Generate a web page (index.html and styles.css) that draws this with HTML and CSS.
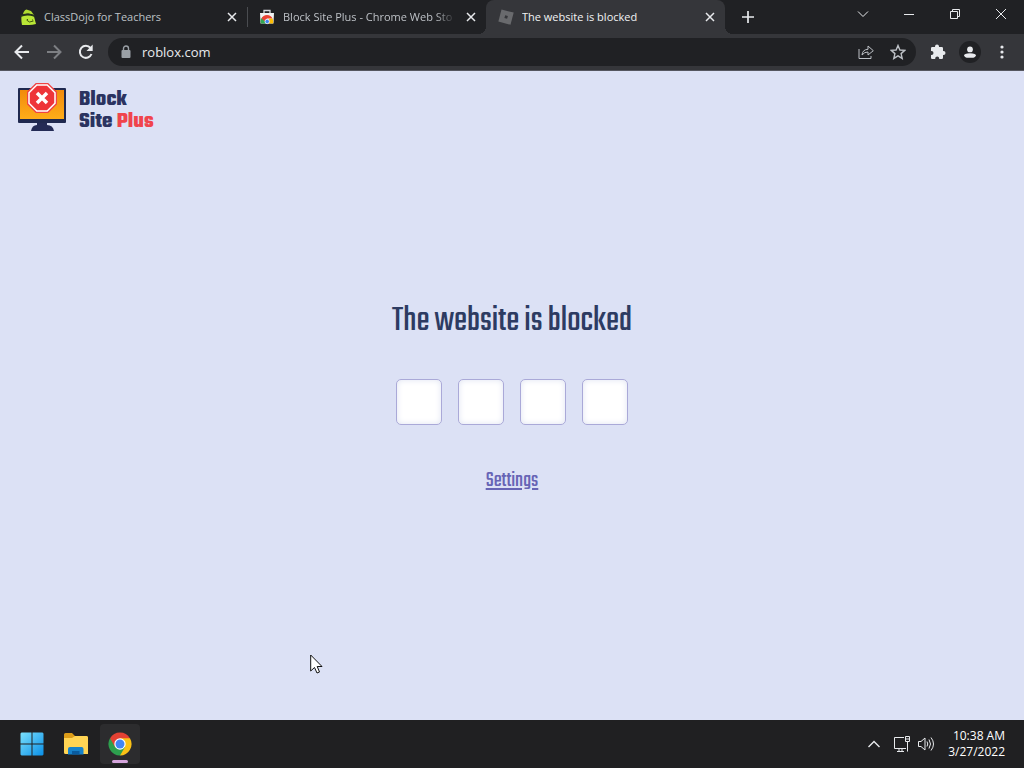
FILE: index.html
```
<!DOCTYPE html>
<html lang="en">
<head>
<meta charset="utf-8">
<meta name="viewport" content="width=device-width, initial-scale=1">
<title>The website is blocked</title>
<link rel="stylesheet" href="styles.css">
</head>
<body>

<div class="tabstrip">
  <div class="tab">
    <svg class="favicon" viewBox="0 0 16 16">
      <path d="M1.500 7 Q7 4 14 7.500 L16 15 Q9 16.500 2 16 Q1 11 1.500 7Z" fill="#b9e636"/>
      <path d="M3 5 Q4 1 6.500 .5 L11 2 L14 6 Q8 3 3 6Z" fill="#b0dc30"/>
      <path d="M0 6.500 Q6 2.500 15 6.200 L14.500 7.800 Q7 5 .5 8Z" fill="#26351a"/>
      <path d="M6.500 11 Q9 14.500 13.500 12 M7 10.500h1 M12 11h1" stroke="#41580f" fill="none"/>
    </svg>
    <span class="title">ClassDojo for Teachers</span>
    <button class="close" aria-label="Close tab"><svg viewBox="0 0 10 10"><path d="M1 1L9 9M9 1L1 9"/></svg></button>
  </div>
  <div class="tab divided">
    <svg class="favicon" viewBox="0 0 16 16">
      <path d="M5 4V1.500h6V4" fill="none" stroke="#d8dade" stroke-width="1.300"/>
      <path d="M1 4h14l-.5 10.500h-13Z" fill="#f1f3f4"/>
      <path d="M2 14.500A6 6 0 0 1 3.500 8L6.500 12.500V14.500Z" fill="#34a853"/>
      <path d="M2.500 9.500A6 6 0 0 1 13.500 9.500H8L5.500 12Z" fill="#ea4335"/>
      <path d="M13.500 9.500A6 6 0 0 1 14 14.500H8.500L10.500 9.500Z" fill="#fbbc05"/>
      <circle cx="8.200" cy="12.500" r="2.200" fill="#4285f4" stroke="#fff" stroke-width=".7"/>
    </svg>
    <span class="title faded">Block Site Plus - Chrome Web Sto</span>
    <button class="close" aria-label="Close tab"><svg viewBox="0 0 10 10"><path d="M1 1L9 9M9 1L1 9"/></svg></button>
  </div>
  <div class="tab active">
    <svg class="favicon" viewBox="0 0 16 16">
      <path d="M3.500 .5L15.700 3.600L12.500 15.800L.4 12.500Z" fill="#696a6d"/>
      <path d="M7.200 6.300L9.900 7L9.100 9.800L6.400 9Z" fill="#35363a"/>
    </svg>
    <span class="title">The website is blocked</span>
    <button class="close" aria-label="Close tab"><svg viewBox="0 0 10 10"><path d="M1 1L9 9M9 1L1 9"/></svg></button>
  </div>
  <button class="newtab" aria-label="New tab"><svg viewBox="0 0 12 12"><path d="M6 0V12M0 6H12"/></svg></button>
  <div class="window-buttons">
    <button aria-label="Search tabs"><svg viewBox="0 0 12 12"><path d="M1 3.500L6 8.500L11 3.500"/></svg></button>
    <button aria-label="Minimize"><svg viewBox="0 0 12 12"><path d="M1 6.500H11"/></svg></button>
    <button aria-label="Restore"><svg viewBox="0 0 12 12"><path d="M1.500 3.500h7v7h-7ZM3.500 3.500v-2h7v7h-2"/></svg></button>
    <button aria-label="Close"><svg viewBox="0 0 12 12"><path d="M1 1L11 11M11 1L1 11"/></svg></button>
  </div>
</div>

<div class="toolbar">
  <div class="nav">
    <button aria-label="Back"><svg viewBox="0 0 16 16"><path d="M15 8H2M8 1.500L1.500 8L8 14.500"/></svg></button>
    <button aria-label="Forward" disabled><svg viewBox="0 0 16 16"><path d="M1 8H14M8 1.500L14.500 8L8 14.500"/></svg></button>
    <button aria-label="Reload"><svg viewBox="0 0 16 16"><path d="M13.500 10A6 6 0 1 1 12.500 4"/><path class="solid" d="M14.700 0.500V7H8.500Z"/></svg></button>
  </div>
  <div class="omnibox">
    <svg class="lock" viewBox="0 0 10 14"><path d="M2.500 6V3.500a2.500 2.500 0 0 1 5 0V6" fill="none" stroke="#9aa0a6" stroke-width="1.400"/><rect x=".5" y="5" width="9" height="8" rx="1" fill="#9aa0a6"/></svg>
    <input type="text" value="roblox.com" aria-label="Address">
    <button aria-label="Share"><svg viewBox="0 0 16 16"><path d="M1 5V14.500H13V12M4 11Q4.500 5.500 10 5.300V2L15.300 6.700L10 11V8Q6.500 7.800 4 11Z"/></svg></button>
    <button aria-label="Bookmark this tab"><svg viewBox="0 0 16 16"><path stroke-width="1.400" d="M8 1.500L9.900 6L14.800 6.400L11.100 9.600L12.200 14.400L8 11.800L3.800 14.400L4.900 9.600L1.200 6.400L6.100 6Z"/></svg></button>
  </div>
  <div class="tools">
    <button aria-label="Extensions"><svg viewBox="0 0 16 16"><path class="solid" d="M1 4.200Q1 3 2.200 3H5V2.500a2 2 0 0 1 4 0V3h2.800Q13 3 13 4.200V7h.5a2 2 0 0 1 0 4H13v2.800Q13 15 11.800 15H9.200v-.5a2 2 0 0 0-4 0v.5H2.200Q1 15 1 13.800V11h.5a2 2 0 0 0 0-4H1Z"/></svg></button>
    <button class="profile" aria-label="Profile"><svg viewBox="0 0 16 16"><circle class="solid" cx="8" cy="5" r="3.300"/><path class="solid" d="M1 14.500V12.500Q1 9.300 8 9.300T15 12.500V14.500Z"/></svg></button>
    <button aria-label="Menu"><svg viewBox="0 0 16 16"><circle class="solid" cx="8" cy="3" r="1.600"/><circle class="solid" cx="8" cy="8" r="1.600"/><circle class="solid" cx="8" cy="13" r="1.600"/></svg></button>
  </div>
</div>

<div class="page">
  <header class="brand">
    <svg viewBox="0 0 48 50">
      <defs><linearGradient id="screen" x2="0" y2="1"><stop stop-color="#f18a0b"/><stop offset="1" stop-color="#ffad19"/></linearGradient></defs>
      <path d="M19 40H29V43Q35 43 36 49H13Q14 43 19 43Z" fill="#242b55"/>
      <rect y="6" width="48" height="35" rx="1" fill="#20294f"/>
      <rect x="2" y="8" width="44" height="29" fill="url(#screen)"/>
      <path d="M17.800 1H30.200L39 9.800V22.200L30.200 31H17.800L9 22.200V9.800Z" fill="#f04444"/>
      <path d="M18.800 3H29.200L37 10.800V21.200L29.200 29H18.800L11 21.200V10.800Z" fill="#ee3439" stroke="#fff" stroke-width="1.500"/>
      <path d="M19 11L29 21M29 11L19 21" stroke="#fff" stroke-width="3.500"/>
    </svg>
    <div class="brand-name">Block<br>Site <span>Plus</span></div>
  </header>
  <main>
    <h1>The website is blocked</h1>
    <form class="pin">
      <input type="password" maxlength="1" aria-label="Digit 1">
      <input type="password" maxlength="1" aria-label="Digit 2">
      <input type="password" maxlength="1" aria-label="Digit 3">
      <input type="password" maxlength="1" aria-label="Digit 4">
    </form>
    <a class="settings" href="#">Settings</a>
  </main>
</div>

<div class="taskbar">
  <div class="apps">
    <button aria-label="Start"><svg viewBox="0 0 24 24">
      <defs><linearGradient id="win" x2="1" y2="1"><stop stop-color="#7be0fb"/><stop offset="1" stop-color="#0a8fe8"/></linearGradient></defs>
      <path d="M1.500 .5H11.500V11.500H.5V1.500ZM12.500 .5H22.500L23.500 1.500V11.500H12.500ZM.5 12.500H11.500V23.500H1.500L.5 22.500ZM12.500 12.500H23.500V22.500L22.500 23.500H12.500Z" fill="url(#win)"/>
    </svg></button>
    <button aria-label="File Explorer"><svg viewBox="0 0 24 24">
      <path d="M0 2.500Q0 1 1.500 1H8L11 4H22Q24 4 24 6V12H0Z" fill="#dc9c18"/>
      <path d="M0 6H8L11 4H22.500Q24 4 24 5.500V22H1.500Q0 22 0 20.500Z" fill="#ffd454"/>
      <path d="M4 22.500V17Q4 15 6 15H17.500Q19.500 15 19.500 17V22.500Z" fill="#1682cb"/>
      <path d="M8 22.500V19H15.500V22.500Z" fill="#0a5b9e"/>
    </svg></button>
    <button class="running" aria-label="Google Chrome"><svg viewBox="0 0 24 24">
      <path d="M12 12L2.040 6.250A11.500 11.500 0 0 1 21.960 6.250Z" fill="#e34133"/>
      <path d="M12 12L21.960 6.250A11.500 11.500 0 0 1 12 23.500Z" fill="#fbc116"/>
      <path d="M12 12V23.500A11.500 11.500 0 0 1 2.040 6.250Z" fill="#2da04e"/>
      <path d="M12 6.250H21.960L17 14.900Z" fill="#fbc116"/>
      <path d="M17 14.900L12 23.500L7 14.900Z" fill="#2da04e"/>
      <path d="M7 14.900L2.040 6.250H12Z" fill="#e34133"/>
      <circle cx="12" cy="12" r="5.700" fill="#fff"/>
      <circle cx="12" cy="12" r="4.500" fill="#4285f4"/>
    </svg></button>
  </div>
  <div class="tray">
    <button aria-label="Show hidden icons"><svg viewBox="0 0 16 16"><path stroke-width="1.400" d="M2.500 11L8 5.500L13.500 11"/></svg></button>
    <button aria-label="Network"><svg viewBox="0 0 16 16"><path d="M10 1.500H.5V12.500H12M3 15.500H10M5 12.500V15.500M8 12.500V15.500M11.500 .5H15.500V5.500H11.500ZM13.500 5.500V15.500M11.500 3H15.500"/></svg></button>
    <button aria-label="Volume"><svg viewBox="0 0 16 16"><path d="M.5 5.500H3L7 2V14L3 10.500H.5ZM9 5.500Q10.500 8 9 10.500M11 3.500Q14 8 11 12.500M13 1.500Q18 8 13 14.500"/></svg></button>
    <div class="clock">10:38 AM<br>3/27/2022</div>
  </div>
</div>

<svg class="cursor" viewBox="0 0 13 20"><path d="M.7 1V17L4.500 13.500L7 19L9.500 18L7.200 12.500H12Z" fill="#fff" stroke="#111"/></svg>

</body>
</html>
```
FILE: styles.css
```
* {box-sizing: border-box;}

body {
  display: flex;
  flex-direction: column;
  min-height: 100vh;
  margin: 0;
  background-color: #dce1f5;
  font-family: "Segoe UI", "Open Sans", sans-serif;
  font-size: 12px;
}

button {
  display: flex;
  align-items: center;
  justify-content: center;
  flex: none;
  padding: 0;
  border: none;
  background: none;
  color: #e8eaed;
  cursor: pointer;
}

button svg {
  width: 16px;
  height: 16px;
  fill: none;
  stroke: currentColor;
}

.solid {
  fill: currentColor;
  stroke: none;
}

/* Tabs */
.tabstrip {
  display: flex;
  height: 34px;
  padding-left: 8px;
  background-color: #202124;
}

.tab {
  display: flex;
  align-items: center;
  flex: 0 1 239px;
  min-width: 0;
  gap: 8px;
  padding: 0 8px 0 12px;
  color: #bdc1c6;
  font-size: 11px;
}

.tab.divided {
  background: linear-gradient(#4a4c50, #4a4c50) left center / 1px 20px no-repeat;
}

.tab.active {
  position: relative;
  border-radius: 8px 8px 0 0;
  background-color: #35363a;
  color: #f1f3f4;
}

/* Curved feet of the active tab */
.tab.active::before, .tab.active::after {
  position: absolute;
  bottom: 0;
  width: 8px;
  height: 8px;
  content: "";
}

.tab.active::before {
  right: 100%;
  background: radial-gradient(circle at 0 0, transparent 8px, #35363a 8px);
}

.tab.active::after {
  left: 100%;
  background: radial-gradient(circle at 100% 0, transparent 8px, #35363a 8px);
}

.favicon {
  flex: none;
  width: 16px;
  height: 16px;
}

.title {
  flex: 1;
  overflow: hidden;
  line-height: 16px;
  white-space: nowrap;
}

.title.faded {
  -webkit-mask-image: linear-gradient(to right, #000 88%, transparent);
  mask-image: linear-gradient(to right, #000 88%, transparent);
}

.close {
  width: 14px;
  height: 14px;
}

.close svg {
  width: 10px;
  height: 10px;
  stroke-width: 1.5;
}

.newtab {
  width: 28px;
  margin-left: 9px;
}

.newtab svg {
  width: 12px;
  height: 12px;
  stroke-width: 1.7;
}

.window-buttons {
  display: flex;
  height: 28px;
  margin-left: auto;
}

.window-buttons button {
  width: 46px;
}

.window-buttons svg {
  width: 12px;
  height: 12px;
}

/* Toolbar */
.toolbar {
  display: flex;
  align-items: center;
  gap: 6px;
  height: 37px;
  padding: 0 6px;
  border-bottom: 1px solid #55565f;
  background-color: #35363a;
}

.nav, .tools {
  display: flex;
}

.nav button, .tools button {
  width: 32px;
  height: 28px;
}

.nav svg {
  stroke-width: 2;
}

.nav button:disabled {
  color: #7d7f83;
}

.tools .profile svg {
  width: 22px;
  height: 22px;
  padding: 4px;
  border-radius: 50%;
  background-color: #202124;
}

.omnibox {
  display: flex;
  align-items: center;
  flex: 1;
  height: 28px;
  padding: 0 2px 0 13px;
  border-radius: 14px;
  background-color: #202124;
}

.omnibox input {
  flex: 1;
  min-width: 0;
  padding: 0 11px;
  border: none;
  outline: none;
  background: none;
  color: #e8eaed;
  font: 13px "Segoe UI", "Open Sans", sans-serif;
}

.omnibox button {
  width: 32px;
  color: #bdc1c6;
}

.lock {
  width: 10px;
  height: 14px;
}

/* Blocked page */
.page {
  display: flex;
  flex-direction: column;
  flex: 1;
  font-family: Teko, "Liberation Sans Narrow", "Liberation Sans", sans-serif;
}

.brand {
  display: flex;
  align-items: center;
  gap: 13px;
  height: 72px;
  padding: 0 18px;
}

.brand svg {
  width: 48px;
  height: 50px;
}

.brand-name {
  padding-top: 8px;
  color: #2b3360;
  font-size: 22px;
  font-weight: bold;
  line-height: 22px;
}

.brand-name span {
  color: #f0444c;
}

main {
  display: flex;
  flex-direction: column;
  align-items: center;
  justify-content: center;
  flex: 1;
  gap: 37px;
  padding-bottom: 62px;
}

h1 {
  margin: 0;
  color: #2d3b62;
  font-size: 36px;
  font-weight: normal;
  line-height: 40px;
}

.pin {
  display: flex;
  gap: 16px;
}

.pin input {
  width: 46px;
  height: 46px;
  border: 1px solid #aaa9d8;
  border-radius: 5px;
  background-color: #fff;
  box-shadow: inset 0 0 6px #dfe3f2;
  font-size: 24px;
  text-align: center;
}

.settings {
  color: #6764b5;
  font-size: 22px;
  line-height: 38px;
}

/* Taskbar */
.taskbar {
  display: flex;
  align-items: center;
  justify-content: space-between;
  height: 48px;
  padding: 0 19px 0 12px;
  background-color: #202022;
}

.apps, .tray {
  display: flex;
  align-items: center;
}

.apps {
  gap: 4px;
}

.apps button {
  position: relative;
  width: 40px;
  height: 40px;
  border-radius: 4px;
}

.apps svg {
  width: 24px;
  height: 24px;
  stroke: none;
}

.apps .running {
  background-color: #2c2c2e;
}

.apps .running::after {
  position: absolute;
  bottom: 1px;
  left: 12px;
  width: 16px;
  height: 3px;
  border-radius: 2px;
  background-color: #d5a5dc;
  content: "";
}

.tray button {
  width: 24px;
  height: 40px;
}

.tray button:first-child {
  width: 32px;
}

.clock {
  margin-left: 10px;
  color: #fff;
  line-height: 16px;
  text-align: right;
}

.cursor {
  position: absolute;
  top: 654px;
  left: 310px;
  width: 13px;
  height: 20px;
  pointer-events: none;
}
```
